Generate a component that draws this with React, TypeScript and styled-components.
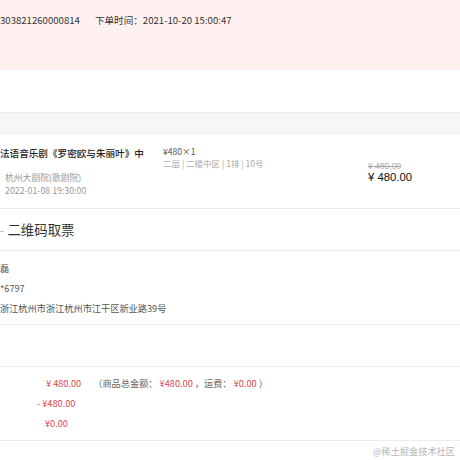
import React from "react";
import styled, { createGlobalStyle } from "styled-components";

const Global = createGlobalStyle`
  html, body { margin: 0; padding: 0; background: #fff; }
  body {
    font-family: "Noto Sans CJK SC", "Noto Sans", sans-serif;
    font-size: 9.5px;
    color: #333;
    width: 460px;
    height: 460px;
    overflow: hidden;
  }
`;

const Page = styled.div`
  display: flex;
  flex-direction: column;
  width: 460px;
  height: 460px;
  position: relative;
`;

const OrderHead = styled.div`
  height: 70px;
  box-sizing: border-box;
  background: #fff1f0;
  padding-top: 10px;
  display: flex;
  gap: 15px;
  line-height: 20px;
  font-size: 9.6px;
  color: #333;
`;

const Gap = styled.div<{ $h: number; $border?: boolean }>`
  height: ${(p) => p.$h}px;
  border-bottom: ${(p) => (p.$border ? "1px solid #ececec" : "none")};
`;

const TableHead = styled.div`
  height: 22px;
  background: #f6f6f6;
  border-top: 1px solid #ececec;
`;

const ProductRow = styled.div`
  height: 74px;
  box-sizing: border-box;
  border-bottom: 1px solid #ececec;
  display: grid;
  grid-template-columns: 163px 205px 1fr;
  padding-top: 10px;
`;

const ProductInfo = styled.div`
  display: flex;
  flex-direction: column;
`;

const Title = styled.div`
  font-size: 9.6px;
  line-height: 16px;
  color: #222;
  font-weight: 500;
  white-space: nowrap;
`;

const Meta = styled.div<{ $top?: number }>`
  font-size: 8.8px;
  line-height: 13px;
  color: #999;
  padding-left: 5px;
  margin-top: ${(p) => p.$top ?? 0}px;
  white-space: nowrap;
`;

const SeatCol = styled.div`
  display: flex;
  flex-direction: column;
`;

const Qty = styled.div`
  font-size: 8.6px;
  line-height: 12px;
  color: #555;
`;

const Seat = styled.div`
  font-size: 8.5px;
  line-height: 12px;
  color: #aaa;
  white-space: nowrap;
`;

const PriceCol = styled.div`
  display: flex;
  flex-direction: column;
  padding-top: 16px;
`;

const OldPrice = styled.div`
  font-family: "Liberation Sans", Arial, sans-serif;
  font-size: 8.5px;
  line-height: 10px;
  color: #aaa;
  text-decoration: line-through;
`;

const Price = styled.div`
  font-family: "Liberation Sans", Arial, sans-serif;
  font-size: 11.3px;
  line-height: 12px;
  color: #111;
`;

const Pickup = styled.div`
  height: 42px;
  box-sizing: border-box;
  border-bottom: 1px solid #ececec;
  display: flex;
  align-items: center;
  gap: 4px;
  font-size: 13.4px;
  color: #333;
  padding-bottom: 1px;
`;

const Dash = styled.span`
  color: #999;
  font-size: 10px;
`;

const Block = styled.div<{ $h: number; $pt: number }>`
  height: ${(p) => p.$h}px;
  box-sizing: border-box;
  padding-top: ${(p) => p.$pt}px;
  border-bottom: 1px solid #ececec;
  display: flex;
  flex-direction: column;
`;

const Line = styled.div<{ $indent?: number }>`
  line-height: 20px;
  font-size: 9.2px;
  color: #555;
  padding-left: ${(p) => p.$indent ?? 0}px;
  white-space: nowrap;
`;

const Red = styled.span`
  color: #e0474c;
`;

const Note = styled.span`
  color: #666;
  margin-left: 12px;
`;

const Watermark = styled.div`
  position: absolute;
  right: 5px;
  bottom: 2px;
  font-size: 9.2px;
  line-height: 14px;
  color: #b5b5b5;
  font-family: "Noto Sans CJK SC", serif;
`;

export default function App() {
  return (
    <>
      <Global />
      <Page>
        <OrderHead>
          <span>303821260000814</span>
          <span>下单时间：2021-10-20 15:00:47</span>
        </OrderHead>
        <Gap $h={42} />
        <TableHead />
        <ProductRow>
          <ProductInfo>
            <Title>法语音乐剧《罗密欧与朱丽叶》中</Title>
            <Meta $top={10}>杭州大剧院(歌剧院)</Meta>
            <Meta>2022-01-08 19:30:00</Meta>
          </ProductInfo>
          <SeatCol>
            <Qty>¥480×1</Qty>
            <Seat>二层 | 二楼中区 | 1排 | 10号</Seat>
          </SeatCol>
          <PriceCol>
            <OldPrice>¥ 480.00</OldPrice>
            <Price>¥ 480.00</Price>
          </PriceCol>
        </ProductRow>
        <Pickup>
          <Dash>-</Dash>
          <span>二维码取票</span>
        </Pickup>
        <Block $h={74} $pt={7}>
          <Line>磊</Line>
          <Line>*6797</Line>
          <Line>浙江杭州市浙江杭州市江干区新业路39号</Line>
        </Block>
        <Gap $h={41} $border />
        <Block $h={74} $pt={6}>
          <Line $indent={46}>
            <Red>¥ 480.00</Red>
            <Note>
              （商品总金额： <Red>¥480.00</Red> ，运费： <Red>¥0.00</Red> ）
            </Note>
          </Line>
          <Line $indent={37}>
            <Red>- ¥480.00</Red>
          </Line>
          <Line $indent={45}>
            <Red>¥0.00</Red>
          </Line>
        </Block>
        <Watermark>@稀土掘金技术社区</Watermark>
      </Page>
    </>
  );
}
